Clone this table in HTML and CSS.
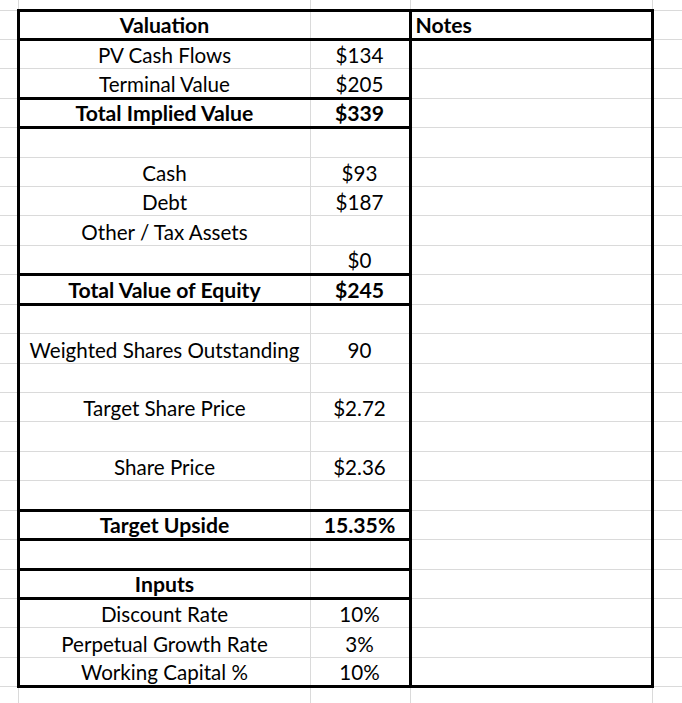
FILE: index.html
```html
<!DOCTYPE html>
<html lang="en">
<head>
<meta charset="utf-8">
<title>Valuation</title>
<link rel="stylesheet" href="styles.css">
</head>
<body>
<table class="sheet">
  <colgroup>
    <col class="col-a"><col class="col-b"><col class="col-c"><col class="col-d"><col class="col-e">
  </colgroup>
  <tbody>
    <tr class="row-top"><td></td><td></td><td></td><td></td><td></td></tr>
    <tr class="row"><td></td><td class="lbl bold tk-t tk-l tk-b">Valuation</td><td class="num tk-t tk-r tk-b"></td><td class="note bold tk-t tk-r tk-b">Notes</td><td></td></tr>
    <tr class="row"><td></td><td class="lbl tk-l">PV Cash Flows</td><td class="num tk-r">$134</td><td class="note tk-r"></td><td></td></tr>
    <tr class="row"><td></td><td class="lbl tk-l tk-b">Terminal Value</td><td class="num tk-r tk-b">$205</td><td class="note tk-r"></td><td></td></tr>
    <tr class="row"><td></td><td class="lbl bold tk-l tk-b">Total Implied Value</td><td class="num bold tk-r tk-b">$339</td><td class="note tk-r"></td><td></td></tr>
    <tr class="row"><td></td><td class="lbl tk-l"></td><td class="num tk-r"></td><td class="note tk-r"></td><td></td></tr>
    <tr class="row"><td></td><td class="lbl tk-l">Cash</td><td class="num tk-r">$93</td><td class="note tk-r"></td><td></td></tr>
    <tr class="row"><td></td><td class="lbl tk-l">Debt</td><td class="num tk-r">$187</td><td class="note tk-r"></td><td></td></tr>
    <tr class="row"><td></td><td class="lbl tk-l">Other / Tax Assets</td><td class="num tk-r"></td><td class="note tk-r"></td><td></td></tr>
    <tr class="row"><td></td><td class="lbl tk-l tk-b"></td><td class="num tk-r tk-b">$0</td><td class="note tk-r"></td><td></td></tr>
    <tr class="row"><td></td><td class="lbl bold tk-l tk-b">Total Value of Equity</td><td class="num bold tk-r tk-b">$245</td><td class="note tk-r"></td><td></td></tr>
    <tr class="row"><td></td><td class="lbl tk-l"></td><td class="num tk-r"></td><td class="note tk-r"></td><td></td></tr>
    <tr class="row"><td></td><td class="lbl tk-l">Weighted Shares Outstanding</td><td class="num tk-r">90</td><td class="note tk-r"></td><td></td></tr>
    <tr class="row"><td></td><td class="lbl tk-l"></td><td class="num tk-r"></td><td class="note tk-r"></td><td></td></tr>
    <tr class="row"><td></td><td class="lbl tk-l">Target Share Price</td><td class="num tk-r">$2.72</td><td class="note tk-r"></td><td></td></tr>
    <tr class="row"><td></td><td class="lbl tk-l"></td><td class="num tk-r"></td><td class="note tk-r"></td><td></td></tr>
    <tr class="row"><td></td><td class="lbl tk-l">Share Price</td><td class="num tk-r">$2.36</td><td class="note tk-r"></td><td></td></tr>
    <tr class="row"><td></td><td class="lbl tk-l tk-b"></td><td class="num tk-r tk-b"></td><td class="note tk-r"></td><td></td></tr>
    <tr class="row"><td></td><td class="lbl bold tk-l tk-b">Target Upside</td><td class="num bold tk-r tk-b">15.35%</td><td class="note tk-r"></td><td></td></tr>
    <tr class="row"><td></td><td class="lbl tk-l tk-b"></td><td class="num tk-r tk-b"></td><td class="note tk-r"></td><td></td></tr>
    <tr class="row"><td></td><td class="lbl bold tk-l tk-b">Inputs</td><td class="num tk-r tk-b"></td><td class="note tk-r"></td><td></td></tr>
    <tr class="row"><td></td><td class="lbl tk-l">Discount Rate</td><td class="num tk-r">10%</td><td class="note tk-r"></td><td></td></tr>
    <tr class="row"><td></td><td class="lbl tk-l">Perpetual Growth Rate</td><td class="num tk-r">3%</td><td class="note tk-r"></td><td></td></tr>
    <tr class="row"><td></td><td class="lbl tk-l tk-b">Working Capital %</td><td class="num tk-r tk-b">10%</td><td class="note tk-r tk-b"></td><td></td></tr>
    <tr class="row-end"><td></td><td></td><td></td><td></td><td></td></tr>
  </tbody>
</table>
</body>
</html>
```
FILE: styles.css
```css
html, body {
  margin: 0;
  padding: 0;
  background: #ffffff;
  overflow: hidden;
  height: 100%;
}

.sheet {
  border-collapse: collapse;
  table-layout: fixed;
  width: 682px;
  font-family: Lato, "Open Sans", "DejaVu Sans", sans-serif;
  font-size: 20.6px;
  color: #000000;
}

.col-a { width: 18px; }
.col-b { width: 292px; }
.col-c { width: 100px; }
.col-d { width: 242px; }
.col-e { width: 30px; }

.sheet td {
  border: 1px solid #dadada;
  padding: 0 4px 2px;
  vertical-align: bottom;
  white-space: nowrap;
  overflow: hidden;
  line-height: 22px;
}

.sheet tr > td:first-child { border-left: none; }
.sheet tr > td:last-child { border-right: none; }
.row-top td { border-top: none; }

.row-top { height: 10px; }
.row { height: 29.43px; }
.row-end { height: 30px; }

.lbl { text-align: center; }
.num { text-align: center; }
.note { text-align: left; }
.bold { font-weight: 700; font-size: 21.2px; }

.sheet td.tk-t { border-top: 3px solid #000000; }
.sheet td.tk-b { border-bottom: 3px solid #000000; }
.sheet td.tk-l { border-left: 3px solid #000000; }
.sheet td.tk-r { border-right: 3px solid #000000; }
```
